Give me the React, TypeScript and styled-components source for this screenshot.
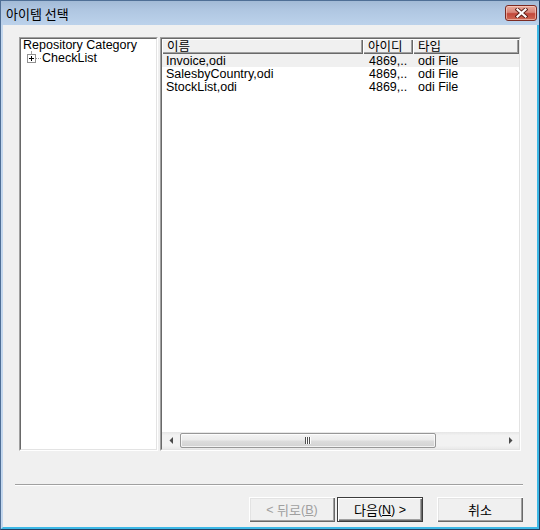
import React from "react";
import styled, { createGlobalStyle, css } from "styled-components";

const GlobalStyle = createGlobalStyle`
  html, body { margin: 0; padding: 0; background: #f0f0f0; }
  body { font-family: "Liberation Sans", "Noto Sans CJK KR", sans-serif; font-size: 12px; color: #000; }
  * { box-sizing: border-box; }
`;

const FONT = `"Liberation Sans", "Noto Sans CJK KR", sans-serif`;

const Frame = styled.div`
  width: 540px;
  height: 530px;
  display: flex;
  flex-direction: column;
  border: 1px solid #4f6f96;
  border-right-color: #233f63;
  border-bottom-color: #233f63;
  background: #bcd3ec;
`;

const TitleBar = styled.div`
  flex: none;
  height: 24px;
  display: flex;
  align-items: center;
  justify-content: space-between;
  padding: 0 2px 0 5px;
  background: linear-gradient(to bottom, #a2bad6 0%, #afc6e1 35%, #bcd2eb 100%);
`;

const Title = styled.span`
  font-family: "Noto Sans CJK KR", sans-serif;
  font-size: 13px;
  line-height: 15px;
  color: #000;
  margin-top: 1px;
`;

const CloseButton = styled.div`
  width: 32px;
  height: 16px;
  border: 1px solid #7c2a22;
  border-radius: 3px;
  background: linear-gradient(to bottom, #e9a99b 0%, #d9877a 45%, #c2473a 55%, #cf6a55 100%);
  box-shadow: inset 0 0 0 1px rgba(255, 220, 210, 0.55);
  display: flex;
  align-items: center;
  justify-content: center;
`;

const Body = styled.div`
  flex: 1;
  display: flex;
  flex-direction: column;
  border-left: 2px solid #c3d7ee;
  border-right: 2px solid #3cb8e6;
  border-bottom: 2px solid #3cb8e6;
  background: #f0f0f0;
  padding-top: 12px;
`;

const PanelRow = styled.div`
  display: flex;
  gap: 2px;
  margin-left: 16px;
  height: 414px;
`;

const SunkenOuter = styled.div<{ $width: number }>`
  width: ${(p) => p.$width}px;
  height: 100%;
  border: 1px solid;
  border-color: #a0a0a0 #ffffff #ffffff #a0a0a0;
  display: flex;
`;

const SunkenInner = styled.div`
  flex: 1;
  min-width: 0;
  border: 1px solid;
  border-color: #696969 #e3e3e3 #e3e3e3 #696969;
  background: #ffffff;
  display: flex;
  flex-direction: column;
`;

const TreeList = styled.div`
  padding-left: 2px;
  font-family: ${FONT};
  font-size: 12.5px;
  line-height: 13px;
`;

const TreeRoot = styled.div`
  height: 13px;
  white-space: nowrap;
`;

const TreeRow = styled.div`
  height: 13px;
  display: flex;
  align-items: center;
  padding-left: 4px;
`;

const Expander = styled.div`
  width: 9px;
  height: 9px;
  flex: none;
  display: flex;
  position: relative;
  &::before {
    content: "";
    position: absolute;
    left: 4px;
    top: -3px;
    height: 2px;
    border-left: 1px dotted #a0a0a0;
  }
`;

const Connector = styled.div`
  width: 5px;
  border-top: 1px dotted #a0a0a0;
`;

const TreeLabel = styled.span`
  margin-left: 1px;
  white-space: nowrap;
`;

const ListArea = styled.div`
  flex: 1;
  display: flex;
  flex-direction: column;
  font-family: ${FONT};
  font-size: 12.5px;
`;

const HeaderRow = styled.div`
  display: flex;
  height: 15px;
  flex: none;
`;

const HeaderCell = styled.div<{ $width?: number }>`
  ${(p) => (p.$width ? css`width: ${p.$width}px; flex: none;` : css`flex: 1;`)}
  height: 15px;
  background: #f0f0f0;
  box-shadow: inset 1px 1px #ffffff, inset -1px -1px #696969, inset -2px -2px #a0a0a0;
  padding-left: 5px;
  font-family: "Noto Sans CJK KR", sans-serif;
  font-size: 12.5px;
  line-height: 14px;
  white-space: nowrap;
`;

const Rows = styled.div`
  flex: 1;
`;

const Row = styled.div<{ $shaded?: boolean }>`
  display: flex;
  height: 13px;
  line-height: 15px;
  background: ${(p) => (p.$shaded ? "#f0f0f0" : "transparent")};
`;

const Cell = styled.div<{ $width?: number; $pad: number }>`
  ${(p) => (p.$width ? css`width: ${p.$width}px; flex: none;` : css`flex: 1;`)}
  height: 13px;
  padding-left: ${(p) => p.$pad}px;
  white-space: nowrap;
`;

const HScroll = styled.div`
  flex: none;
  height: 17px;
  display: flex;
  align-items: stretch;
  background: linear-gradient(to bottom, #e6e6e6 0%, #f2f2f2 20%, #f2f2f2 80%, #e9e9e9 100%);
`;

const ArrowBox = styled.div`
  width: 17px;
  flex: none;
  display: flex;
  align-items: center;
  justify-content: center;
`;

const Thumb = styled.div`
  width: 256px;
  flex: none;
  margin: 1px;
  border: 1px solid #979797;
  border-radius: 2px;
  background: linear-gradient(to bottom, #f4f4f4 0%, #ebebeb 45%, #dcdcdc 55%, #d2d2d2 100%);
  box-shadow: inset 0 0 0 1px rgba(255, 255, 255, 0.7);
  display: flex;
  align-items: center;
  justify-content: center;
`;

const Track = styled.div`
  flex: 1;
`;

const Separator = styled.div`
  margin: 33px 0 0 12px;
  width: 508px;
  height: 2px;
  border-top: 1px solid #a0a0a0;
  border-bottom: 1px solid #ffffff;
`;

const ButtonRow = styled.div`
  display: flex;
  margin: 11px 0 0 246px;
`;

const Button = styled.button<{ $primary?: boolean; $gap?: number }>`
  width: 86px;
  height: 25px;
  margin: 0 0 0 ${(p) => p.$gap ?? 0}px;
  padding: 0;
  font-family: ${FONT};
  font-size: 12.5px;
  color: ${(p) => (p.disabled ? "#a0a0a0" : "#000")};
  background: #f0f0f0;
  border: ${(p) => (p.$primary ? "1px solid #3c3c3c" : "none")};
  box-shadow: ${(p) =>
    p.$primary
      ? "inset 1px 1px #ffffff, inset -1px -1px #696969, inset -2px -2px #a0a0a0"
      : "inset 1px 1px #ffffff, inset -1px -1px #696969, inset -2px -2px #a0a0a0, inset 2px 2px #e3e3e3"};
  display: flex;
  align-items: center;
  justify-content: center;
  white-space: pre;
  cursor: default;
  u { text-decoration: underline; }
`;

const Ko = styled.span`
  font-family: "Noto Sans CJK KR", sans-serif;
  font-size: 13px;
`;

const files = [
  { name: "Invoice,odi", id: "4869,..", type: "odi File" },
  { name: "SalesbyCountry,odi", id: "4869,..", type: "odi File" },
  { name: "StockList,odi", id: "4869,..", type: "odi File" },
];

const CloseGlyph = () => (
  <svg width="13" height="10" viewBox="0 0 13 10">
    <path d="M2.5 1.5 L10.5 8.5 M10.5 1.5 L2.5 8.5" stroke="#5a1d16" strokeWidth="4" strokeLinecap="square" />
    <path d="M2.5 1.5 L10.5 8.5 M10.5 1.5 L2.5 8.5" stroke="#ffffff" strokeWidth="2.2" strokeLinecap="square" />
  </svg>
);

const PlusBox = () => (
  <svg width="9" height="9" viewBox="0 0 9 9">
    <rect x="0.5" y="0.5" width="8" height="8" fill="#ffffff" stroke="#919191" />
    <path d="M2 4.5H7M4.5 2V7" stroke="#000000" />
  </svg>
);

const ArrowLeft = () => (
  <svg width="4" height="7" viewBox="0 0 4 7">
    <polygon points="4,0 4,7 0.5,3.5" fill="#4a4a4a" />
  </svg>
);

const ArrowRight = () => (
  <svg width="4" height="7" viewBox="0 0 4 7">
    <polygon points="0,0 0,7 3.5,3.5" fill="#4a4a4a" />
  </svg>
);

const Grip = () => (
  <svg width="7" height="7" viewBox="0 0 7 7">
    <path d="M0.5 0V7M2.5 0V7M4.5 0V7" stroke="#4f4f4f" />
    <path d="M1.5 0V7M3.5 0V7M5.5 0V7" stroke="#ffffff" />
  </svg>
);

export default function App() {
  return (
    <>
      <GlobalStyle />
      <Frame>
        <TitleBar>
          <Title>아이템 선택</Title>
          <CloseButton>
            <CloseGlyph />
          </CloseButton>
        </TitleBar>
        <Body>
          <PanelRow>
            <SunkenOuter $width={139}>
              <SunkenInner>
                <TreeList>
                  <TreeRoot>Repository Category</TreeRoot>
                  <TreeRow>
                    <Expander>
                      <PlusBox />
                    </Expander>
                    <Connector />
                    <TreeLabel>CheckList</TreeLabel>
                  </TreeRow>
                </TreeList>
              </SunkenInner>
            </SunkenOuter>
            <SunkenOuter $width={361}>
              <SunkenInner>
                <ListArea>
                  <HeaderRow>
                    <HeaderCell $width={201}>이름</HeaderCell>
                    <HeaderCell $width={50}>아이디</HeaderCell>
                    <HeaderCell>타입</HeaderCell>
                  </HeaderRow>
                  <Rows>
                    {files.map((f, i) => (
                      <Row key={f.name} $shaded={i === 0}>
                        <Cell $width={201} $pad={4}>{f.name}</Cell>
                        <Cell $width={50} $pad={6}>{f.id}</Cell>
                        <Cell $pad={5}>{f.type}</Cell>
                      </Row>
                    ))}
                  </Rows>
                  <HScroll>
                    <ArrowBox>
                      <ArrowLeft />
                    </ArrowBox>
                    <Thumb>
                      <Grip />
                    </Thumb>
                    <Track />
                    <ArrowBox>
                      <ArrowRight />
                    </ArrowBox>
                  </HScroll>
                </ListArea>
              </SunkenInner>
            </SunkenOuter>
          </PanelRow>
          <Separator />
          <ButtonRow>
            <Button disabled>
              {"< "}
              <Ko>뒤로</Ko>(<u>B</u>)
            </Button>
            <Button $primary $gap={2}>
              <Ko>다음</Ko>(<u>N</u>){" >"}
            </Button>
            <Button $gap={14}>
              <Ko>취소</Ko>
            </Button>
          </ButtonRow>
        </Body>
      </Frame>
    </>
  );
}
